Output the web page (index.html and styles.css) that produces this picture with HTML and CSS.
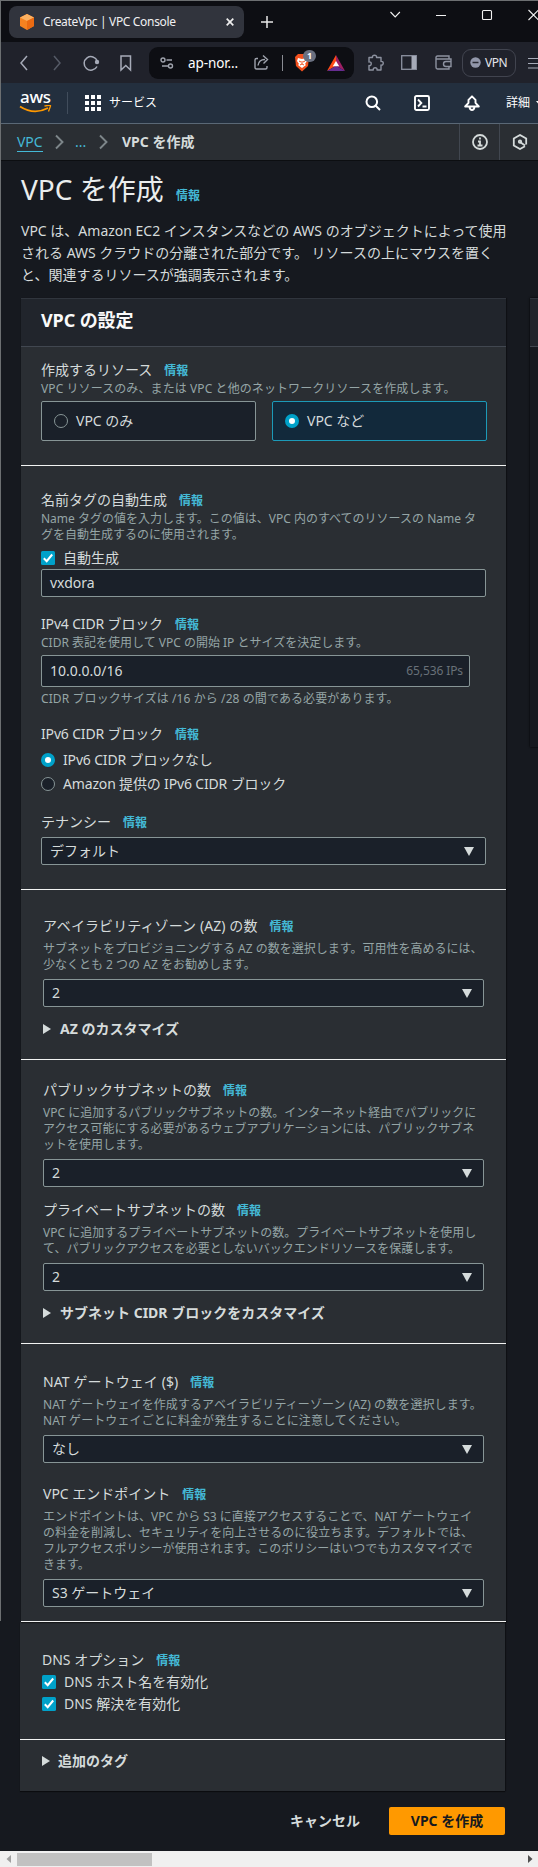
FILE: index.html
```html
<!DOCTYPE html>
<html lang="ja">
<head>
<meta charset="utf-8">
<title>CreateVpc | VPC Console</title>
<link rel="stylesheet" href="styles.css">
</head>
<body>
<div class="window">
  <div class="tabstrip">
    <div class="tab">
      <svg class="cube" width="16" height="18" viewBox="0 0 16 18"><path d="M8 1l7 3.500v8.500L8 17l-7-4V4.500z" fill="#f58220"/><path d="M8 1l7 3.500-7 3.500-7-3.500z" fill="#fbb061"/><path d="M8 8l7-3.500V13l-7 4z" fill="#ea6a12"/></svg>
      <span class="tab-title">CreateVpc | VPC Console</span>
      <svg class="tab-close" width="8" height="8" viewBox="0 0 8 8"><path d="M.7.7l6.600 6.600M7.300.7L.7 7.300" stroke="#eee" stroke-width="1.700"/></svg>
    </div>
    <svg class="plus" width="12" height="12" viewBox="0 0 12 12"><path d="M6 0v12M0 6h12" stroke="#e8e8e8" stroke-width="1.500"/></svg>
    <svg class="wincontrols" width="148" height="12" viewBox="0 0 148 12" fill="none" stroke="#f2f2f2" stroke-width="1.100"><path d="M.5 3l4.700 5 4.700-5M46 6.500h10M138.500 1l10 10M148.500 1l-10 10"/><rect x="92.500" y="1.500" width="9" height="9" rx="1"/></svg>
  </div>

  <div class="toolbar">
    <svg class="nav-icons" width="114" height="18" viewBox="0 0 114 18" fill="none" stroke-width="1.500"><path d="M8 2L2 9l6 7" stroke="#a6abb8"/><path d="M35 2l6 7-6 7" stroke="#555a66"/><path d="M78 12.500A6.800 6.800 0 1 1 78.300 7" stroke="#a6abb8"/><circle cx="78" cy="8" r="2.200" fill="#a6abb8"/><path d="M102 2h9.500v14l-4.700-4.500L102 16z" stroke="#a6abb8"/></svg>
    <div class="urlbar">
      <svg width="14" height="14" viewBox="0 0 14 14" fill="none" stroke="#a0a4ae" stroke-width="1.400"><circle cx="3" cy="4" r="2"/><circle cx="10.500" cy="10" r="2"/><path d="M6.500 4H12M2 10h6"/></svg>
      <span class="url">ap-nor...</span>
      <svg class="share" width="17" height="17" viewBox="0 0 17 17" fill="none" stroke="#a0a4ae" stroke-width="1.400"><path d="M4 4.500H2.500A1.500 1.500 0 0 0 1 6v7.500A1.500 1.500 0 0 0 2.500 15h9a1.500 1.500 0 0 0 1.500-1.500V12M4 11.500C4.500 7.500 7 5.500 11 5.500M9 1.500l4.500 4L9.500 9.500"/></svg>
      <i class="pipe"></i>
      <span class="brave">
        <svg width="16" height="19" viewBox="0 0 16 19"><path d="M4 1h8l3 3-1 9-6 5.500L2 13 1 4z" fill="#f2501e"/><path d="M4 5l4 1 4-1 1 3-2 3 1 1-4 3-4-3 1-1-2-3z" fill="#fff"/><path d="M5 8l2 1M11 8L9 9M8 8v3M6 12l2-1 2 1" stroke="#f2501e" fill="none"/></svg>
        <b class="badge">1</b>
      </span>
      <svg class="bat" width="18" height="16" viewBox="0 0 18 16"><path d="M9 0L0 16l9-5.300z" fill="#ff4b16"/><path d="M9 0l9 16-9-5.300z" fill="#9e1f63"/><path d="M0 16h18l-9-5.300z" fill="#662d91"/><path d="M9 6l3.200 5.300H5.800z" fill="#fff"/></svg>
    </div>
    <svg class="puzzle" width="17" height="17" viewBox="0 0 17 17" fill="none" stroke="#8d92a0" stroke-width="1.400" stroke-linejoin="round"><path d="M2 3.500h3.500c-.8-3 4.800-3 4 0H14V7.500c3-.8 3 4.300 0 3.500v5h-4c.8-3-4.500-3-3.700 0H2v-4.500c3 .8 3-4.300 0-3.500z"/></svg>
    <svg class="sidebar" width="16" height="15" viewBox="0 0 16 15"><rect x=".7" y=".7" width="14.600" height="13.600" fill="none" stroke="#8d92a0" stroke-width="1.300"/><path d="M10.500 1H15v13h-4.500z" fill="#a6abb8"/></svg>
    <svg class="wallet" width="17" height="15" viewBox="0 0 17 15" fill="none" stroke="#8d92a0" stroke-width="1.400"><path d="M14 4V1H2.500Q1 1 1 2.500v9.800Q1 14 2.500 14H14v-2.500M1 4h15v7.500h-5a2 2 0 0 1 0-5h5"/></svg>
    <div class="vpn"><svg width="11" height="11" viewBox="0 0 11 11"><circle cx="5.500" cy="5.500" r="5.200" fill="#9297aa"/><path d="M2.500 5.500h6" stroke="#282a33" stroke-width="1.500"/></svg><span>VPN</span></div>
    <svg class="menu" width="12" height="12" viewBox="0 0 12 12" stroke="#a6abb8" stroke-width="1.200"><path d="M0 1.500h12M0 6.500h12M0 11h12"/></svg>
  </div>

  <div class="awsnav">
    <div class="logo"><span>aws</span><svg width="33" height="10" viewBox="0 0 33 10"><path d="M1 1.500Q15 10.500 29 3" fill="none" stroke="#f90" stroke-width="1.800"/><path d="M25.500 1Q32-.5 31.500 1T29.500 6.500" fill="none" stroke="#f90" stroke-width="1.300"/></svg></div>
    <i class="sep"></i>
    <svg class="grid" width="16" height="16" viewBox="0 0 16 16" fill="#fff"><path d="M0 0h4v4H0zM6 0h4v4H6zM12 0h4v4h-4zM0 6h4v4H0zM6 6h4v4H6zM12 6h4v4h-4zM0 12h4v4H0zM6 12h4v4H6zM12 12h4v4h-4z"/></svg>
    <span class="services">サービス</span>
    <div class="navright">
      <svg class="search" width="16" height="16" viewBox="0 0 16 16" fill="none" stroke="#fff" stroke-width="2"><circle cx="6.800" cy="6.800" r="5.300"/><path d="M10.500 10.500L15 15"/></svg>
      <i class="sep"></i>
      <svg width="16" height="16" viewBox="0 0 16 16" fill="none" stroke="#fff" stroke-width="1.900"><rect x="1" y="1" width="14" height="14" rx="1.500"/><path d="M4 4.500L7.300 8 4 11.500M8.500 11.500h4"/></svg>
      <i class="sep"></i>
      <svg width="16" height="16" viewBox="0 0 16 16" fill="none" stroke="#fff" stroke-width="1.900" stroke-linejoin="round"><path d="M8 1.300L4.500 4.800v3L1.200 11.500h13.600L11.500 7.800v-3zM5.500 12Q6 15 8 15t2.500-3"/></svg>
      <i class="sep"></i>
      <span class="more">詳細</span>
      <svg class="morecaret" width="7" height="5" viewBox="0 0 7 5"><path d="M0 0h7L3.500 4.500z" fill="#fff"/></svg>
    </div>
  </div>

  <div class="crumbs">
    <a class="crumb-link">VPC</a>
    <svg class="chev" width="9" height="16" viewBox="0 0 9 16"><path d="M1 1.500l6.500 6.500L1 14.500" fill="none" stroke="#7d868a" stroke-width="1.900"/></svg>
    <span class="dots">...</span>
    <svg class="chev" width="9" height="16" viewBox="0 0 9 16"><path d="M1 1.500l6.500 6.500L1 14.500" fill="none" stroke="#7d868a" stroke-width="1.900"/></svg>
    <b class="current">VPC を作成</b>
    <div class="tool"><svg width="16" height="16" viewBox="0 0 16 16" fill="none" stroke="#d5dbdb" stroke-width="1.800"><circle cx="8" cy="8" r="7"/><path d="M8 3.400v2M6 7.500h2v4M5.500 11.500h5"/></svg></div>
    <div class="tool last"><svg width="16" height="16" viewBox="0 0 16 16" fill="none" stroke="#d5dbdb" stroke-width="1.800"><path d="M13 12.200L8 15l-6.200-3.500v-7L8 1l6.200 3.500v6M8 8l5 3.500"/><circle cx="8" cy="7.700" r="1.200"/></svg></div>
  </div>

  <main class="page">
    <h1>VPC を作成 <a class="info">情報</a></h1>
    <p class="lead">VPC は、Amazon EC2 インスタンスなどの AWS のオブジェクトによって使用<br>される AWS クラウドの分離された部分です。 リソースの上にマウスを置く<br>と、関連するリソースが強調表示されます。</p>

    <div class="columns">
      <div class="card">
        <h2>VPC の設定</h2>
        <section class="s1">
          <div class="label">作成するリソース<a class="info">情報</a></div>
          <div class="desc wide">VPC リソースのみ、または VPC と他のネットワークリソースを作成します。</div>
          <div class="tiles">
            <div class="tile"><i class="radio"></i>VPC のみ</div>
            <div class="tile on"><i class="radio on"></i>VPC など</div>
          </div>
        </section>
        <section class="s2">
          <div class="label">名前タグの自動生成<a class="info">情報</a></div>
          <div class="desc">Name タグの値を入力します。この値は、VPC 内のすべてのリソースの Name タ<br>グを自動生成するのに使用されます。</div>
          <div class="check"><svg class="box" width="14" height="14" viewBox="0 0 14 14"><rect width="14" height="14" rx="1.500" fill="#00a1c9"/><path d="M2.800 7.200l2.900 3L11.200 3.500" fill="none" stroke="#fff" stroke-width="2"/></svg>自動生成</div>
          <div class="field">vxdora</div>
          <div class="label next tight">IPv4 CIDR ブロック<a class="info">情報</a></div>
          <div class="desc">CIDR 表記を使用して VPC の開始 IP とサイズを決定します。</div>
          <div class="field cidr">10.0.0.0/16<span class="ips">65,536 IPs</span></div>
          <div class="desc hint wide">CIDR ブロックサイズは /16 から /28 の間である必要があります。</div>
          <div class="label next tight">IPv6 CIDR ブロック<a class="info">情報</a></div>
          <div class="check first tight"><i class="radio on"></i>IPv6 CIDR ブロックなし</div>
          <div class="check second tight"><i class="radio"></i>Amazon 提供の IPv6 CIDR ブロック</div>
          <div class="label next">テナンシー<a class="info">情報</a></div>
          <div class="field select top4">デフォルト</div>
        </section>
        <section class="s3 inset">
          <div class="label wide">アベイラビリティゾーン (AZ) の数<a class="info">情報</a></div>
          <div class="desc">サブネットをプロビジョニングする AZ の数を選択します。可用性を高めるには、<br>少なくとも 2 つの AZ をお勧めします。</div>
          <div class="field select">2</div>
          <div class="expander">AZ のカスタマイズ</div>
        </section>
        <section class="s4 inset">
          <div class="label">パブリックサブネットの数<a class="info">情報</a></div>
          <div class="desc">VPC に追加するパブリックサブネットの数。インターネット経由でパブリックに<br>アクセス可能にする必要があるウェブアプリケーションには、パブリックサブネ<br>ットを使用します。</div>
          <div class="field select">2</div>
          <div class="label gap12">プライベートサブネットの数<a class="info">情報</a></div>
          <div class="desc">VPC に追加するプライベートサブネットの数。プライベートサブネットを使用し<br>て、パブリックアクセスを必要としないバックエンドリソースを保護します。</div>
          <div class="field select">2</div>
          <div class="expander">サブネット CIDR ブロックをカスタマイズ</div>
        </section>
        <section class="s5 inset">
          <div class="label wide">NAT ゲートウェイ ($)<a class="info">情報</a></div>
          <div class="desc wide">NAT ゲートウェイを作成するアベイラビリティーゾーン (AZ) の数を選択します。<br>NAT ゲートウェイごとに料金が発生することに注意してください。</div>
          <div class="field select">なし</div>
          <div class="label gap20">VPC エンドポイント<a class="info">情報</a></div>
          <div class="desc">エンドポイントは、VPC から S3 に直接アクセスすることで、NAT ゲートウェイ<br>の料金を削減し、セキュリティを向上させるのに役立ちます。デフォルトでは、<br>フルアクセスポリシーが使用されます。このポリシーはいつでもカスタマイズで<br>きます。</div>
          <div class="field select">S3 ゲートウェイ</div>
        </section>
      </div>
      <div class="preview"><div class="preview-head"></div></div>
    </div>
    <div class="card tail">
      <section class="s6 inset">
        <div class="label">DNS オプション<a class="info">情報</a></div>
        <div class="check"><svg class="box" width="14" height="14" viewBox="0 0 14 14"><rect width="14" height="14" rx="1.500" fill="#00a1c9"/><path d="M2.800 7.200l2.900 3L11.200 3.500" fill="none" stroke="#fff" stroke-width="2"/></svg>DNS ホスト名を有効化</div>
        <div class="check"><svg class="box" width="14" height="14" viewBox="0 0 14 14"><rect width="14" height="14" rx="1.500" fill="#00a1c9"/><path d="M2.800 7.200l2.900 3L11.200 3.500" fill="none" stroke="#fff" stroke-width="2"/></svg>DNS 解決を有効化</div>
      </section>
      <section class="s7 inset">
        <div class="expander">追加のタグ</div>
      </section>
    </div>
    <div class="actions"><span class="cancel">キャンセル</span><span class="primary">VPC を作成</span></div>
  </main>
  <div class="scrollbar">
    <svg width="5" height="8" viewBox="0 0 5 8"><path d="M5 0v8L.5 4z" fill="#a0a0a0"/></svg>
    <div class="thumb"></div>
    <svg class="right" width="5" height="8" viewBox="0 0 5 8"><path d="M0 0v8l4.500-4z" fill="#505050"/></svg>
  </div>
</div>
</body>
</html>
```
FILE: styles.css
```css
* { box-sizing: border-box; }
body {
  margin: 0;
  background: #16191f;
  color: #d5dbdb;
  font: 14px/22px "Noto Sans", "Noto Sans CJK JP", sans-serif;
  white-space: nowrap;
}
svg { display: block; flex: none; }
.window { width: 538px; height: 1867px; overflow: hidden; display: flex; flex-direction: column;
  background: linear-gradient(#6c6f71, #6c6f71) 0 0 / 1px 1621px no-repeat; }

/* browser chrome */
.tabstrip { height: 42px; border-top: 1px solid #6c6f71; background: #0d0e13; display: flex; align-items: flex-start; margin-left: 1px; padding: 5px 0 0 8px; }
.tab { width: 235px; height: 32px; border-radius: 8px; background: #31343d; display: flex; align-items: center; padding: 0 10px; color: #f0f0f2; }
.tab-title { margin-left: 8px; font-size: 12px; letter-spacing: -.33px; }
.tab-close { margin-left: auto; }
.plus { margin: 10px 0 0 17px; }
.wincontrols { margin: 3px 0 0 auto; }
.toolbar { height: 41px; margin-left: 1px; background: #20222b; display: flex; align-items: center; }
.nav-icons { margin-left: 18px; }
.urlbar { margin-left: 16px; width: 205px; height: 32px; flex: none; border-radius: 9px; background: #0d0e13; display: flex; align-items: center; padding-left: 11px; }
.url { margin-left: 14px; width: 52px; color: #fff; font-size: 13.500px; letter-spacing: -.1px; }
.share { margin-left: 14px; }
.pipe { width: 1px; height: 16px; background: #8a8c93; margin-left: 11px; }
.brave { position: relative; margin-left: 11px; }
.badge { position: absolute; left: 9px; top: -3px; width: 13px; height: 12px; border-radius: 6px; background: #6a7080; color: #fff; font-size: 9px; line-height: 12px; text-align: center; }
.bat { margin-left: 17px; }
.puzzle { margin-left: 13px; }
.sidebar { margin-left: 17px; }
.wallet { margin-left: 18px; }
.vpn { margin-left: 10px; width: 54px; height: 28px; flex: none; border: 1px solid #41444f; border-radius: 9px; display: flex; align-items: center; padding-left: 7px; gap: 4px; color: #e4e5ea; font-size: 12px; letter-spacing: -.5px; }
.menu { margin-left: 12px; }

/* console navigation */
.awsnav { height: 41px; margin-left: 1px; background: #232f3e; border-bottom: 1px solid #5a6876; display: flex; align-items: center; }
.logo { width: 33px; height: 24px; margin-left: 18px; padding-top: 1px; color: #fff; }
.logo span { display: block; height: 13px; margin-left: 1px; font-size: 17px; line-height: 10px; font-weight: 500; letter-spacing: -.3px; }
.sep { width: 1px; height: 22px; background: #414d5c; }
.logo + .sep { margin-left: 15px; }
.grid { margin-left: 17px; }
.services { margin-left: 8px; font-size: 12px; color: #fff; }
.navright { margin-left: auto; display: flex; align-items: center; width: 173px; flex: none; gap: 17px; overflow: hidden; }
.search { margin-right: -1px; }
.more { margin-left: -8px; font-size: 12px; color: #fff; }
.morecaret { margin-left: -11px; }
.crumbs { height: 37px; margin-left: 1px; background: #2a2e33; border-bottom: 1px solid #0c0e11; display: flex; align-items: center; padding-left: 16px; }
.crumb-link { color: #44b9d6; border-bottom: 1px solid #44b9d6; line-height: 19px; width: 26px; letter-spacing: -.1px; }
.chev { margin-left: 12px; }
.dots { margin-left: 11px; width: 12px; color: #44b9d6; }
.current { margin-left: 14px; margin-right: auto; }
.tool { width: 40px; height: 36px; flex: none; border-left: 1px solid #414750; display: flex; align-items: center; justify-content: center; }
.last { width: 39px; padding-left: 2px; }

/* page */
.page { height: 1690px; padding-left: 21px; flex: none; }
h1 { margin: 0; padding-top: 10px; height: 59px; font-size: 28px; font-weight: 400; line-height: 36px; color: #eaeded; }
.info { color: #44b9d6; font-size: 12px; font-weight: 700; margin-left: 12px; letter-spacing: 0; }
h1 .info { margin-left: 5px; }
.lead { margin: 0; height: 78px; }
.columns { display: flex; gap: 24px; }
.card { width: 485px; flex: none; background: #2a2e33; box-shadow: 0 1px 1px #0007, 1px 0 1px #0004; }
h2 { margin: 0; height: 49px; padding: 11px 20px; border-top: 1px solid #30353d; border-bottom: 1px solid #414750; background: #21252c; color: #fafafa; font-size: 18px; line-height: 20px; letter-spacing: -.1px; }
section { border-bottom: 1px solid #f2f3f3; padding: 0 20px; }
.inset { padding-left: 22px; padding-right: 22px; }
.s1 { height: 119px; padding-top: 12px; }
.s2 { height: 424px; padding-top: 23px; }
.s3 { height: 170px; padding-top: 25px; }
.s4 { height: 284px; padding-top: 19px; }
.s5 { height: 278px; padding-top: 27px; }
.s6 { height: 118px; padding-top: 27px; }
.s7 { height: 51px; border: 0; padding-top: 10px; }
.label { height: 22px; }
.next { margin-top: 16px; }
.gap12 { margin-top: 12px; }
.gap20 { margin-top: 20px; }
.tight { letter-spacing: -.16px; }
.wide { letter-spacing: .09px; }
.desc { font-size: 12px; line-height: 16px; color: #95a5a6; }
.inset .desc { margin-top: 4px; }
.hint { margin-top: 4px; }
.tiles { margin-top: 4px; display: flex; gap: 16px; width: 446px; letter-spacing: 0; }
.tile { flex: 1; height: 40px; border: 1px solid #879596; border-radius: 2px; background: #1a2029; display: flex; align-items: center; padding-left: 12px; gap: 8px; }
.tile.on { border-color: #1c9ab8; background: #12293b; }
.radio { width: 14px; height: 14px; flex: none; border: 1px solid #879596; border-radius: 50%; background: #1a2029; }
.radio.on { border: 4px solid #00a1c9; background: #fff; }
.check { height: 22px; display: flex; align-items: center; gap: 8px; }
.desc + .check, .first { margin-top: 4px; }
.second { margin-top: 2px; }
.field { height: 28px; border: 1px solid #879596; border-radius: 2px; background: #1a2029; padding: 0 8px; display: flex; align-items: center; }
.cidr { width: 429px; height: 32px; margin-top: 4px; padding-right: 6px; }
.ips { margin-left: auto; font-size: 12px; color: #687078; letter-spacing: -.1px; }
.select { margin-top: 6px; padding-right: 11px; }
.top4 { margin-top: 4px; }
.select::after { content: ""; margin-left: auto; border: 5px solid transparent; border-top: 9px solid #d5dbdb; border-bottom: 0; }
.expander { margin-top: 11px; display: flex; align-items: center; gap: 9px; font-weight: 700; }
.s7 .expander { margin-top: 0; gap: 8px; }
.expander::before { content: ""; border: 5px solid transparent; border-left: 8px solid #d5dbdb; border-right: 0; }
.preview { width: 20px; height: 449px; box-shadow: 0 0 2px #000; background: #16191f; flex: none; }
.preview-head { height: 49px; background: #21252c; border-bottom: 1px solid #414750; border-top: 1px solid #30353d; }
.tail { margin-left: -1px; }
.actions { display: flex; justify-content: flex-end; align-items: center; margin-top: 16px; padding-right: 33px; font-weight: 700; gap: 29px; }
.primary { width: 116px; height: 28px; line-height: 28px; border-radius: 2px; background: #f90; color: #16191f; text-align: center; }
.scrollbar { height: 16px; flex: none; background: #f0f0f0; display: flex; align-items: center; padding: 0 5px 0 6px; }
.thumb { width: 135px; height: 13px; margin-left: 6px; background: #c1c1c1; }
.right { margin-left: auto; }
```
